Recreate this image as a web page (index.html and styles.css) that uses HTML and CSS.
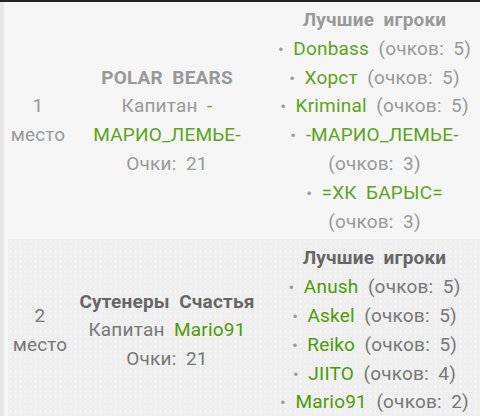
FILE: index.html
```html
<!DOCTYPE html>
<html lang="ru">
<head>
<meta charset="utf-8">
<link rel="stylesheet" href="styles.css">
</head>
<body>
<div class="topbar"></div>
<div class="page">
  <div class="rank rank-first">
    <div class="place">1<br>место</div>
    <div class="team">
      <div class="team-name">POLAR BEARS</div>
      <div>Капитан <a class="nick">-<wbr>МАРИО_ЛЕМЬЕ-</a></div>
      <div>Очки: 21</div>
    </div>
    <div class="best">
      <div class="best-title">Лучшие игроки</div>
      <div><span class="dot">•</span> <a class="nick">Donbass</a> (очков: 5)</div>
      <div><span class="dot">•</span> <a class="nick">Хорст</a> (очков: 5)</div>
      <div><span class="dot">•</span> <a class="nick">Kriminal</a> (очков: 5)</div>
      <div><span class="dot">•</span> <a class="nick">-МАРИО_ЛЕМЬЕ-</a> (очков: 3)</div>
      <div><span class="dot">•</span> <a class="nick">=ХК БАРЫС=</a> (очков: 3)</div>
    </div>
  </div>
  <div class="rank rank-second">
    <div class="place">2<br>место</div>
    <div class="team">
      <div class="team-name">Сутенеры Счастья</div>
      <div>Капитан <a class="nick">Mario91</a></div>
      <div>Очки: 21</div>
    </div>
    <div class="best">
      <div class="best-title">Лучшие игроки</div>
      <div><span class="dot">•</span> <a class="nick">Anush</a> (очков: 5)</div>
      <div><span class="dot">•</span> <a class="nick">Askel</a> (очков: 5)</div>
      <div><span class="dot">•</span> <a class="nick">Reiko</a> (очков: 5)</div>
      <div><span class="dot">•</span> <a class="nick">JIITO</a> (очков: 4)</div>
      <div><span class="dot">•</span> <a class="nick">Mario91</a> (очков: 2)</div>
    </div>
  </div>
</div>
</body>
</html>
```
FILE: styles.css
```css
html, body {
  margin: 0;
  padding: 0;
  background: #f5f5f5;
  overflow: hidden;
}
body {
  font-family: Roboto, "Noto Sans", sans-serif;
  font-size: 19px;
  line-height: 28.8px;
  letter-spacing: 0.2px;
  word-spacing: 4.5px;
}
.topbar {
  height: 2px;
  background: #222;
}
.page {
  border-left: 4px solid #e6e6e6;
}
.rank {
  display: grid;
  grid-template-columns: 68px 190px 215px;
  align-items: center;
  text-align: center;
  padding: 4px 0 3px;
}
.best {
  padding-left: 10px;
}
.rank-first {
  color: #999;
  min-height: 230px;
}
.rank-second {
  margin-left: 4px;
  grid-template-columns: 64px 190px 215px;
  color: #777;
  background-color: #eeeeee;
  background-image: radial-gradient(circle, #f6f6f6 0.8px, transparent 1.2px);
  background-size: 5px 5px;
  padding-top: 5px;
}
.team-name, .best-title {
  font-weight: bold;
}
.rank-first .team-name, .rank-first .best-title { color: #999; }
.rank-second .team-name, .rank-second .best-title { color: #666; }
.nick {
  color: #4d9a06;
  text-decoration: none;
}
.rank-first .nick { color: #5ea31c; }
.dot {
  font-size: 17px;
  color: #999;
  word-spacing: 3px;
}
```
